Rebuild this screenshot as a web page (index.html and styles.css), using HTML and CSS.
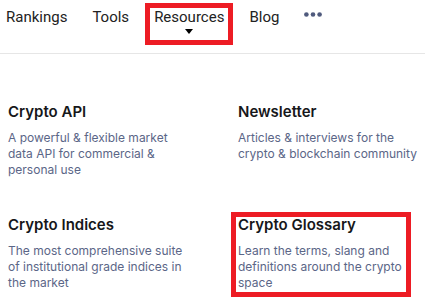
FILE: index.html
```html
<!DOCTYPE html>
<html lang="en">
<head>
  <meta charset="UTF-8" />
  <meta name="viewport" content="width=device-width, initial-scale=1.0"/>
  <title>Resources</title>
  <link rel="stylesheet" href="styles.css">
</head>
<body>
  <nav class="nav">
    <ul class="nav-list">
      <li class="nav-item">Rankings</li>
      <li class="nav-item">Tools</li>
      <li class="nav-item nav-item-active">
        Resources
        <span class="caret"></span>
      </li>
      <li class="nav-item">Blog</li>
      <li class="nav-item nav-more">
        <svg width="18" height="5" viewBox="0 0 18 5">
          <circle cx="2.4" cy="2.5" r="2.3" fill="#4f5a7d"/>
          <circle cx="9" cy="2.5" r="2.3" fill="#4f5a7d"/>
          <circle cx="15.6" cy="2.5" r="2.3" fill="#4f5a7d"/>
        </svg>
      </li>
    </ul>
  </nav>

  <main class="menu-grid">
    <div class="menu-card">
      <h4>Crypto API</h4>
      <p>A powerful &amp; flexible market data API for commercial &amp; personal use</p>
    </div>
    <div class="menu-card">
      <h4>Newsletter</h4>
      <p>Articles &amp; interviews for the crypto &amp; blockchain community</p>
    </div>
    <div class="menu-card">
      <h4>Crypto Indices</h4>
      <p>The most comprehensive suite of institutional grade indices in the market</p>
    </div>
    <div class="menu-card">
      <h4>Crypto Glossary</h4>
      <p>Learn the terms, slang and definitions around the crypto space</p>
      <span class="highlight"></span>
    </div>
  </main>
</body>
</html>
```

FILE: styles.css
```css
* { box-sizing: border-box; }

body {
  margin: 0;
  min-height: 100vh;
  background-color: #fff;
  font-family: 'Inter', 'Noto Sans', sans-serif;
  color: #16171a;
}

.nav {
  height: 54px;
  border-bottom: 1px solid #e6e6e6;
  padding: 8px 0 0 6px;
}

.nav-list {
  display: flex;
  align-items: flex-start;
  gap: 25px;
  margin: 0;
  padding: 0;
  list-style: none;
}

.nav-item {
  font-family: 'Roboto', 'Liberation Sans', sans-serif;
  font-size: 15px;
  line-height: 18px;
  color: #222;
}

.nav-item-active {
  display: flex;
  flex-direction: column;
  align-items: center;
  margin: 0 -4px;
  padding: 0 4px 6px;
  outline: 5px solid #ed1c24;
}

.caret {
  margin-top: 3px;
  width: 0;
  height: 0;
  border-left: 4px solid transparent;
  border-right: 4px solid transparent;
  border-top: 5px solid #000;
}

.nav-more {
  padding-top: 4px;
  line-height: 0;
}

.menu-grid {
  display: grid;
  grid-template-columns: 180px 180px;
  column-gap: 50px;
  row-gap: 37px;
  padding: 48px 0 0 8px;
}

.menu-card {
  position: relative;
}

.menu-card h4 {
  margin: 0 0 8px;
  font-size: 15px;
  line-height: 20px;
  font-weight: 600;
  color: #16171a;
}

.menu-card p {
  margin: 0;
  font-size: 12px;
  line-height: 16px;
  color: #5b6687;
}

.highlight {
  position: absolute;
  left: -7px;
  top: -3px;
  width: 180px;
  height: 85px;
  border: 5px solid #ed1c24;
}
```
